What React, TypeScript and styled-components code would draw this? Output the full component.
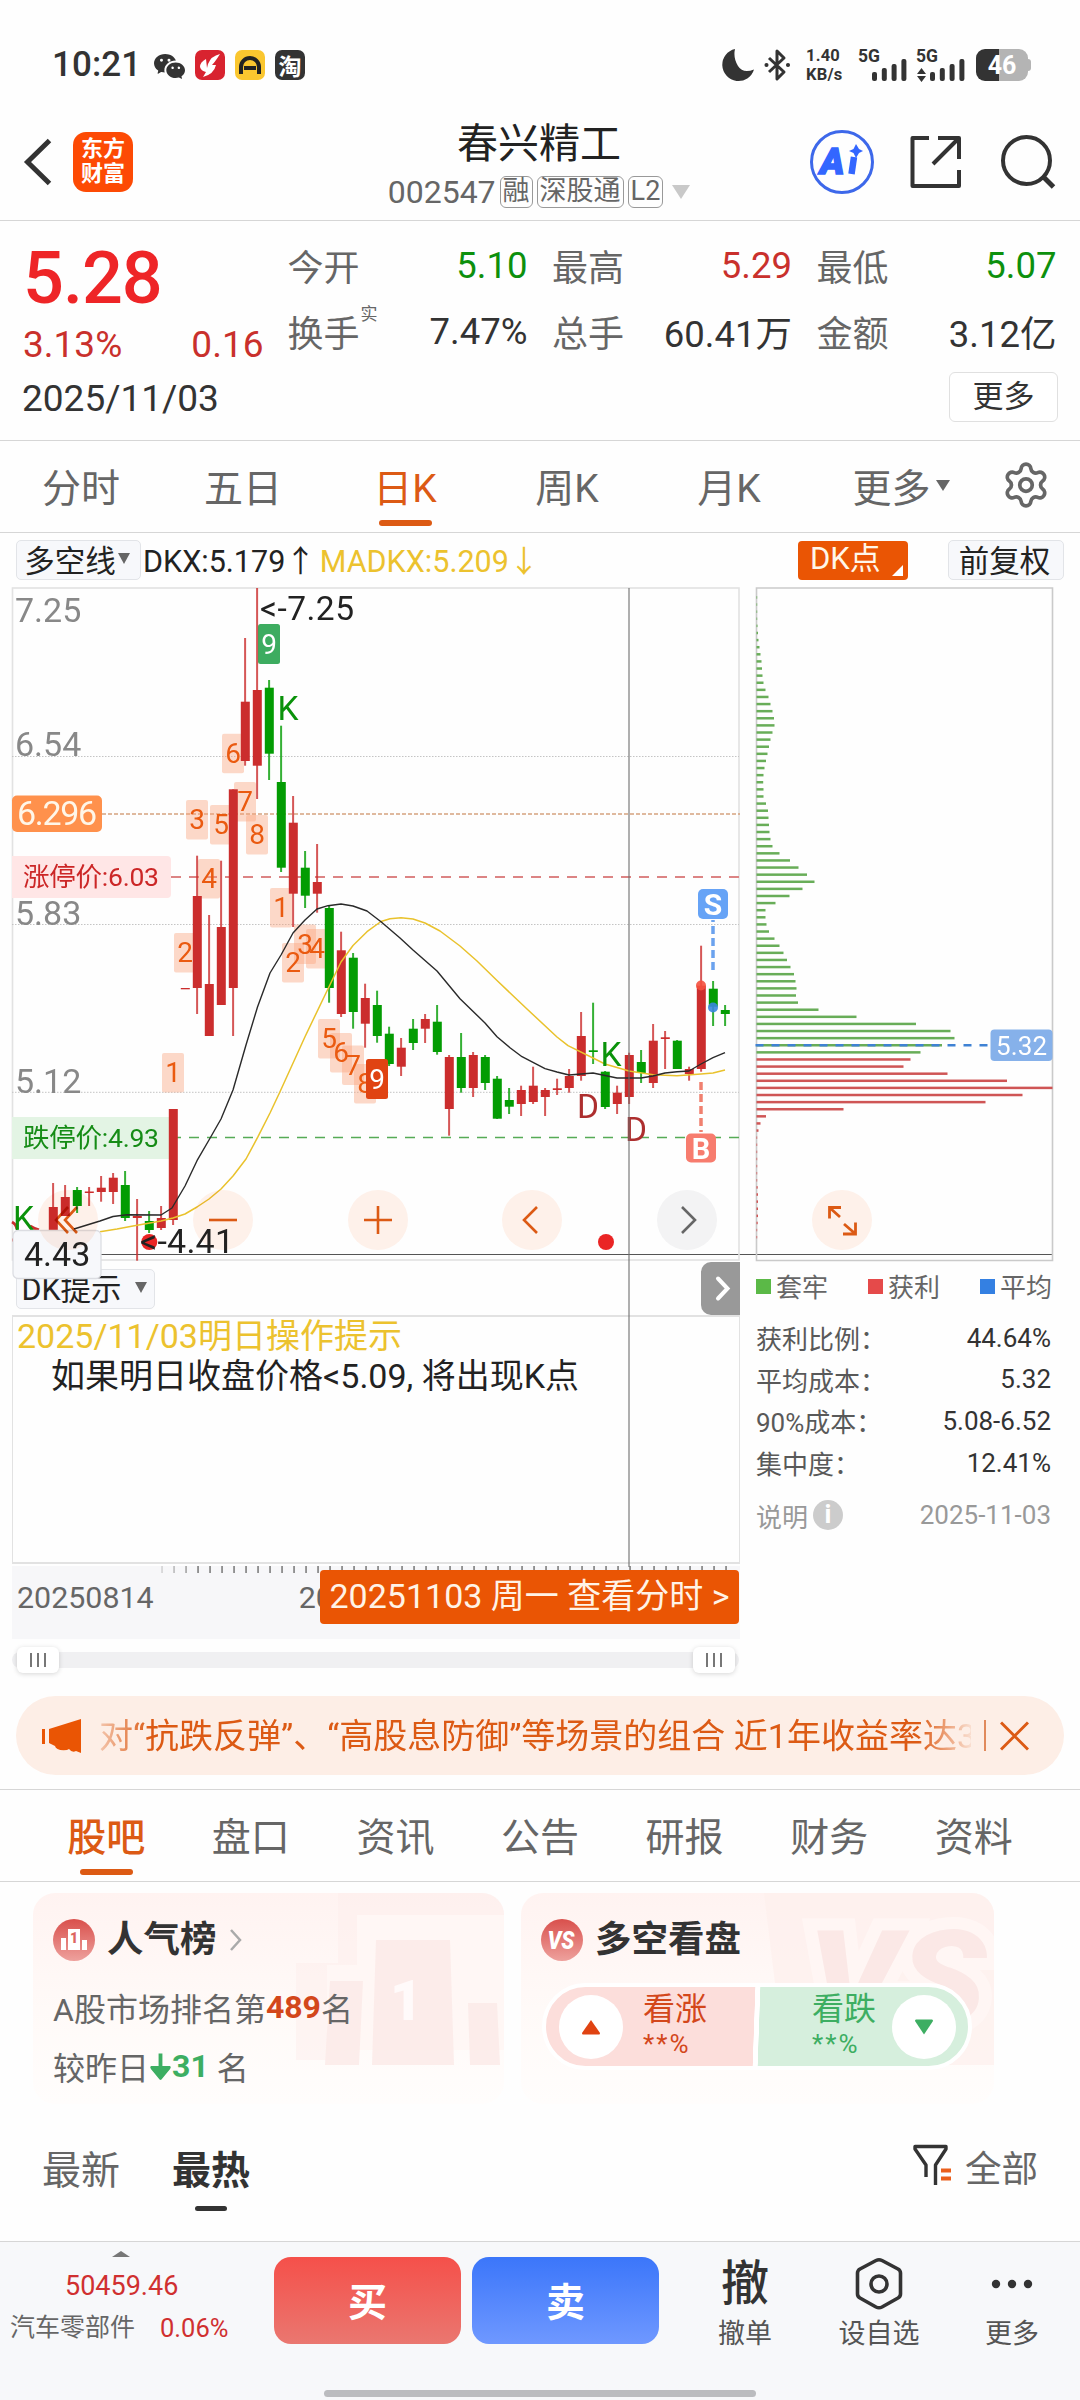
import React from "react";
import styled, { createGlobalStyle, css } from "styled-components";
import { Settings } from "lucide-react";
import { BsWechat } from "react-icons/bs";

const FONT = `Roboto, "Noto Sans CJK SC", sans-serif`;

const GlobalStyle = createGlobalStyle`
  * { box-sizing: border-box; }
  body { margin: 0; background: #fefefe; }
  svg { display: block; }
  svg text { font-family: ${FONT}; }
`;

const Screen = styled.div`
  width: 1080px;
  height: 2400px;
  overflow: hidden;
  background: #fefefe;
  font-family: ${FONT};
  color: #333;
  display: flex;
  flex-direction: column;
  white-space: nowrap;
`;

/* ---------- status bar ---------- */
const StatusBar = styled.div`
  height: 108px;
  padding: 22px 52px 0 52px;
  display: flex;
  align-items: center;
  justify-content: space-between;
`;
const StatusGroup = styled.div`
  display: flex;
  align-items: center;
  height: 36px;
`;
const Clock = styled.span`
  font-size: 35px;
  line-height: 36px;
  font-weight: 500;
  letter-spacing: 0.1px;
  color: #333;
  width: 102px;
`;
const AppBadge = styled.span<{ $bg: string }>`
  width: 30px;
  height: 30px;
  border-radius: 7px;
  margin-left: 10px;
  background: ${(p) => p.$bg};
  color: #fff;
  font-size: 23px;
  font-weight: 700;
  display: flex;
  align-items: center;
  justify-content: center;
`;
const NetSpeed = styled.div`
  width: 67px;
  padding-left: 15px;
  font-size: 16.5px;
  line-height: 19px;
  font-weight: 700;
  letter-spacing: 0.2px;
`;
const Battery = styled.div`
  width: 52px;
  height: 32px;
  border-radius: 9px;
  margin-left: 9px;
  background: linear-gradient(90deg, #333 0 23px, #b4b4b4 23px);
  color: #fff;
  font-size: 25px;
  font-weight: 700;
  display: flex;
  align-items: center;
  justify-content: center;
`;
const BatteryTip = styled.div`
  width: 3px;
  height: 12px;
  border-radius: 0 3px 3px 0;
  background: #b4b4b4;
  margin-right: -3px;
`;

/* ---------- header ---------- */
const Header = styled.header`
  height: 113px;
  border-bottom: 1.5px solid #d6d6d6;
  display: flex;
  align-items: center;
  justify-content: space-between;
  padding: 0 24px 4px 22px;
`;
const HeaderSide = styled.div<{ $end?: boolean }>`
  width: 300px;
  display: flex;
  align-items: center;
  justify-content: ${(p) => (p.$end ? "flex-end" : "flex-start")};
`;
const AppLogo = styled.div`
  width: 60px;
  height: 60px;
  border-radius: 13px;
  margin-left: 19px;
  background: #fd4a04;
  color: #fff;
  font-size: 22px;
  line-height: 25px;
  font-weight: 700;
  text-align: center;
  padding-top: 4px;
`;
const TitleBlock = styled.div`
  display: flex;
  flex-direction: column;
  align-items: center;
  padding-top: 8px;
`;
const Title = styled.h1`
  margin: 0;
  font-size: 41px;
  line-height: 52px;
  font-weight: 400;
  color: #222;
`;
const SubTitle = styled.div`
  display: flex;
  align-items: center;
  gap: 4px;
  height: 44px;
  font-size: 32px;
  color: #666;
`;
const Tag = styled.span`
  height: 32px;
  padding: 0 2px;
  border: 1.5px solid #999;
  border-radius: 6px;
  font-size: 27px;
  line-height: 28px;
`;
const DownTriangle = styled.i<{ $w: number; $h: number; $c: string; $ml?: number }>`
  width: 0;
  height: 0;
  margin-left: ${(p) => p.$ml ?? 0}px;
  border-left: ${(p) => p.$w / 2}px solid transparent;
  border-right: ${(p) => p.$w / 2}px solid transparent;
  border-top: ${(p) => p.$h}px solid ${(p) => p.$c};
`;

/* ---------- quote ---------- */
const Quote = styled.section`
  height: 220px;
  border-bottom: 1.5px solid #d6d6d6;
  display: flex;
  flex-direction: column;
`;
const QuoteTop = styled.div`
  display: flex;
  height: 151px;
`;
const PriceBlock = styled.div`
  width: 287.5px;
  padding: 18px 24px 0 23px;
  color: #c9302c;
`;
const Price = styled.div`
  font-size: 72px;
  line-height: 80px;
  font-weight: 500;
  letter-spacing: -1px;
  color: #ee2527;
`;
const Change = styled.div`
  display: flex;
  justify-content: space-between;
  font-size: 37px;
  line-height: 52px;
`;
const QuoteGrid = styled.div`
  padding-top: 12px;
  display: grid;
  grid-template-columns: repeat(3, 240px);
  grid-auto-rows: 66px;
  column-gap: 24.5px;
`;
const Cell = styled.div<{ $color?: string }>`
  display: flex;
  justify-content: space-between;
  align-items: center;
  padding-bottom: 1px;
  font-size: 36.5px;
  color: ${(p) => p.$color ?? "#333"};
`;
const CellLabel = styled.span`
  font-size: 36px;
  color: #666;
  display: flex;
  padding-bottom: 2px;
`;
const Sup = styled.small`
  font-size: 17px;
  line-height: 18px;
  margin-left: 1px;
`;
const QuoteBottom = styled.div`
  display: flex;
  justify-content: space-between;
  align-items: center;
  height: 50px;
  padding: 0 22px 0 22px;
  font-size: 37px;
  line-height: 54px;
`;
const QuoteDate = styled.span`
  padding-top: 4px;
`;
const MoreButton = styled.button`
  width: 109px;
  height: 50px;
  background: #fff;
  border: 1.5px solid #e0e0e0;
  border-radius: 6px;
  font: 400 31px/44px ${FONT};
  color: #333;
  padding: 0;
`;

/* ---------- tabs ---------- */
const Tabs = styled.nav<{ $h: number; $pad: string; $top?: boolean }>`
  height: ${(p) => p.$h}px;
  border-bottom: 1.5px solid #d6d6d6;
  ${(p) => p.$top && "border-top: 1.5px solid #d6d6d6;"}
  padding: ${(p) => p.$pad};
  display: flex;
`;
const Tab = styled.div<{ $active?: boolean; $bold?: boolean; $w: number }>`
  width: ${(p) => p.$w}px;
  position: relative;
  display: flex;
  align-items: center;
  justify-content: center;
  padding-bottom: 3px;
  font-size: 39px;
  font-weight: ${(p) => (p.$bold ? 500 : 400)};
  color: ${(p) => (p.$active ? "#dc5a14" : "#666")};
  ${(p) =>
    p.$active &&
    css`
      &::after {
        content: "";
        position: absolute;
        bottom: 6px;
        width: 53px;
        height: 6px;
        border-radius: 3px;
        background: #dc5a14;
      }
    `}
`;

/* ---------- indicator row ---------- */
const IndicatorRow = styled.div`
  height: 55px;
  padding: 0 16px 1px;
  display: flex;
  align-items: center;
  font-size: 30.5px;
`;
const Chip = styled.div<{ $w: number }>`
  width: ${(p) => p.$w}px;
  height: 40px;
  border: 1.5px solid #e2e4e8;
  border-radius: 5px;
  background: #f7f8fb;
  color: #222;
  font-size: 30.5px;
  display: flex;
  align-items: center;
  justify-content: center;
  padding: 0 3px 3px 0;
`;
const Reading = styled.span<{ $c: string; $ml: number }>`
  color: ${(p) => p.$c};
  margin-left: ${(p) => p.$ml}px;
  padding-bottom: 3px;
`;
const DkChip = styled.div`
  width: 110px;
  height: 39px;
  margin: 0 40px 0 auto;
  padding: 0 5px 4px 12px;
  border-radius: 4px;
  background: #ea5504;
  color: #fff6ea;
  font-size: 31px;
  line-height: 35px;
  display: flex;
  justify-content: space-between;
  align-items: flex-end;
`;
const Corner = styled.i`
  border-left: 11px solid transparent;
  border-bottom: 11px solid #fff;
`;

/* ---------- chart area ---------- */
const ChartArea = styled.section`
  position: relative;
  display: flex;
  height: 1092px;
`;
const LeftColumn = styled.div`
  width: 756px;
  display: flex;
  flex-direction: column;
`;
const RightColumn = styled.div`
  width: 296px;
`;
const Pane = styled.div`
  position: relative;
  height: 674px;
  z-index: 2;
  svg {
    overflow: visible;
  }
`;
const RoundButtons = styled.div<{ $left: number }>`
  position: absolute;
  left: ${(p) => p.$left}px;
  top: 602px;
  display: flex;
  gap: 94.8px;
  mix-blend-mode: multiply;
`;
const RoundButton = styled.div<{ $gray?: boolean }>`
  width: 60px;
  height: 60px;
  border-radius: 50%;
  background: ${(p) => (p.$gray ? "#f3f3f4" : "#fef1ea")};
  color: ${(p) => (p.$gray ? "#666" : "#dc5a14")};
  display: flex;
  align-items: center;
  justify-content: center;
`;
const DkHeader = styled.div`
  height: 53px;
  padding-left: 16px;
  width: 740px;
  display: flex;
  justify-content: space-between;
  align-items: center;
`;
const NextHandle = styled.div`
  width: 39px;
  height: 53px;
  border-radius: 10px 0 0 10px;
  background: #999;
  display: flex;
  align-items: center;
  justify-content: center;
`;
const HintPanel = styled.div`
  margin-left: 12px;
  width: 728px;
  height: 249px;
  border: 2px solid #e2e2e2;
  border-width: 2px 1.5px;
  padding: 0 0 0 4px;
  font-size: 34px;
  line-height: 40px;
  color: #222;
`;
const HintTitle = styled.div`
  margin-top: -1px;
  color: #ecc22e;
`;
const HintText = styled.div`
  padding-left: 34px;
`;
const TimeAxis = styled.div`
  margin: 2px 0 0 12px;
  width: 728px;
  height: 73px;
  background: #f7f7f9;
  position: relative;
  display: flex;
  align-items: center;
  padding: 0 0 11px 5px;
  font-size: 30.4px;
  color: #666;
  svg {
    position: absolute;
    left: 0;
    top: 0;
  }
`;
const SecondDate = styled.span`
  margin-left: 145px;
`;
const DateFlag = styled.div`
  position: absolute;
  right: 1px;
  top: 4px;
  width: 419px;
  height: 54px;
  border-radius: 4px;
  background: #ea5504;
  color: #fff3e6;
  font-size: 34px;
  line-height: 53px;
  text-align: center;
`;
const Slider = styled.div`
  margin: 13px 0 0 12px;
  width: 727px;
  height: 16px;
  border-radius: 8px;
  background: #f0f0f2;
  display: flex;
  align-items: center;
  justify-content: space-between;
  padding: 0 4px 0 5px;
`;
const SliderHandle = styled.div`
  width: 42px;
  height: 26px;
  border-radius: 6px;
  background: #fff;
  box-shadow: 0 1px 5px rgba(0, 0, 0, 0.16);
  display: flex;
  align-items: center;
  justify-content: center;
  gap: 5px;
  i {
    width: 2px;
    height: 14px;
    background: #777;
  }
`;
const CrossV = styled.div`
  position: absolute;
  z-index: 3;
  left: 628px;
  top: 0;
  width: 2px;
  height: 979px;
  background: rgba(110, 110, 110, 0.55);
`;
const CrossH = styled.div`
  position: absolute;
  z-index: 1;
  left: 100px;
  top: 666px;
  width: 952px;
  height: 1px;
  background: #555;
`;
const Legend = styled.div`
  height: 50px;
  display: flex;
  align-items: center;
  justify-content: space-between;
  font-size: 26px;
  color: #666;
  padding-bottom: 4px;
  margin-bottom: 5px;
`;
const LegendItem = styled.span<{ $c: string }>`
  display: flex;
  align-items: center;
  &::before {
    content: "";
    width: 15px;
    height: 15px;
    margin: 3px 5px 0 0;
    background: ${(p) => p.$c};
  }
`;
const Stat = styled.div`
  display: flex;
  justify-content: space-between;
  align-items: center;
  height: 41.6px;
  font-size: 26px;
  color: #333;
  padding-right: 1px;
  span {
    color: #595959;
  }
`;
const Note = styled.div`
  display: flex;
  align-items: center;
  height: 64px;
  font-size: 26px;
  color: #999;
  padding-right: 1px;
`;
const InfoDot = styled.i`
  width: 30px;
  height: 30px;
  border-radius: 50%;
  background: #ccc;
  color: #fff;
  margin: 0 auto 0 5px;
  font: 700 26px/29px ${FONT};
  text-align: center;
`;

/* ---------- banner ---------- */
const Banner = styled.div`
  margin: 16px 16px 14px;
  height: 79px;
  border-radius: 40px;
  background: #fdeee6;
  display: flex;
  align-items: center;
  padding-left: 25px;
  color: #dc5a14;
`;
const Marquee = styled.div`
  margin-left: 15px;
  width: 873px;
  overflow: hidden;
  padding-left: 1px;
  font-size: 34px;
  line-height: 46px;
  mask-image: linear-gradient(90deg, rgba(0, 0, 0, 0.25), #000 6%, #000 94%, rgba(0, 0, 0, 0.1));
`;
const BannerLine = styled.i`
  width: 1.5px;
  height: 31px;
  margin: 0 14px 0 13px;
  background: #e08a5c;
`;

/* ---------- cards ---------- */
const Cards = styled.div`
  display: flex;
  gap: 17px;
  padding: 11px 33px 0;
`;
const Card = styled.article<{ $w: number }>`
  position: relative;
  width: ${(p) => p.$w}px;
  height: 211px;
  border-radius: 22px;
  overflow: hidden;
  padding: 26px 20px 0 20px;
  background: linear-gradient(180deg, #fff3f1, #fffaf8 55%, #fffdfc);
`;
const Watermark = styled.svg`
  position: absolute;
  inset: 0;
`;
const CardHead = styled.div`
  position: relative;
  height: 42px;
  display: flex;
  align-items: center;
  font-size: 36.5px;
  line-height: 40px;
  font-weight: 700;
  color: #333;
  svg {
    margin-right: 12px;
  }
`;
const CardLine = styled.div<{ $mt: number }>`
  position: relative;
  margin-top: ${(p) => p.$mt}px;
  height: 44px;
  display: flex;
  align-items: center;
  font-size: 32px;
  color: #666;
`;
const Strong = styled.b<{ $c: string }>`
  color: ${(p) => p.$c};
  font-weight: 700;
`;
const Vote = styled.div`
  position: relative;
  margin: 22px 0 0 1px;
  width: 430px;
  height: 87px;
  border-radius: 44px;
  border: 4px solid #fff;
  display: flex;
  align-items: center;
  justify-content: space-between;
  padding: 0 12px 0 13px;
  background: linear-gradient(92deg, #fcdedb 0 209px, #fff 209.5px 214px, #d6efdd 214.5px);
`;
const VoteText = styled.div<{ $c: string; $side: "l" | "r" }>`
  color: ${(p) => p.$c};
  margin: ${(p) => (p.$side === "l" ? "0 auto 0 20px" : "0 16px 0 auto")};
  padding-bottom: 2px;
  font-size: 32px;
  line-height: 37px;
`;
const VotePct = styled.div`
  font-size: 26px;
  line-height: 32px;
  letter-spacing: 2px;
`;
const VoteDot = styled.div`
  width: 64px;
  height: 64px;
  border-radius: 50%;
  background: #fff;
  display: flex;
  align-items: center;
  justify-content: center;
`;

/* ---------- feed sort ---------- */
const SortRow = styled.div`
  height: 137px;
  padding: 0 42px 12px;
  display: flex;
  align-items: center;
  font-size: 39px;
  color: #666;
`;
const SortTab = styled.span<{ $active?: boolean }>`
  position: relative;
  margin-right: 52px;
  ${(p) =>
    p.$active &&
    css`
      color: #333;
      font-weight: 700;
      &::after {
        content: "";
        position: absolute;
        left: 23px;
        top: 67px;
        width: 32px;
        height: 5px;
        border-radius: 3px;
        background: #333;
      }
    `}
`;
const FilterBox = styled.span`
  margin-left: auto;
  display: flex;
  align-items: center;
  gap: 12px;
  font-size: 36.5px;
  svg {
    margin-bottom: 3px;
  }
`;

/* ---------- bottom bar ---------- */
const BottomBar = styled.footer`
  position: relative;
  flex: 1;
  border-top: 1.5px solid #d6d6d6;
  background: #f7f8fa;
  display: flex;
`;
const IndexBox = styled.div`
  width: 274px;
  padding-top: 9px;
  display: flex;
  flex-direction: column;
  font-size: 27px;
  color: #d03030;
`;
const UpTriangle = styled.i`
  margin-left: 112px;
  width: 0;
  border-left: 9px solid transparent;
  border-right: 9px solid transparent;
  border-bottom: 6px solid #777;
`;
const IndexValue = styled.div`
  padding-left: 65px;
  margin-top: 8px;
  line-height: 42px;
`;
const IndexName = styled.div`
  display: flex;
  padding-left: 10px;
  gap: 25px;
  font-size: 25.5px;
  line-height: 42px;
  span {
    color: #666;
    font-size: 25px;
  }
`;
const TradeButton = styled.button<{ $from: string; $to: string }>`
  width: 187px;
  height: 87px;
  margin: 15px 11px 0 0;
  border: 0;
  border-radius: 17px;
  background: linear-gradient(180deg, ${(p) => p.$from}, ${(p) => p.$to});
  color: #fff;
  font: 700 39px/87px ${FONT};
  padding: 3px 0 0;
`;
const Action = styled.div<{ $w: number; $ml?: number }>`
  width: ${(p) => p.$w}px;
  margin-left: ${(p) => p.$ml ?? 0}px;
  padding-top: 12px;
  display: flex;
  flex-direction: column;
  align-items: center;
  font-size: 27px;
  line-height: 40px;
  color: #555;
`;
const ActionIcon = styled.div`
  height: 60px;
  display: flex;
  align-items: center;
  font-size: 48px;
  font-weight: 500;
  color: #333;
`;
const HomeBar = styled.div`
  position: absolute;
  left: 324px;
  bottom: 3px;
  width: 432px;
  height: 7px;
  border-radius: 4px;
  background: #bbbcbf;
`;

/* ---------- data ---------- */
type Candle = [number, number, number, number, 0 | 1];
// high, body top, body bottom, low, 1 = rising; one entry per trading day
const candles: Candle[] = [
  [1183, 1207, 1232, 1232, 1],
  [1185, 1197, 1216, 1216, 1],
  [1187, 1190, 1206, 1213, 0],
  [1187, 1191.5, 1193, 1206, 1],
  [1176, 1187.7, 1192, 1201.7, 1],
  [1173, 1177.7, 1192, 1204, 1],
  [1171, 1185, 1218, 1221, 0],
  [1199, 1216, 1218, 1260.7, 1],
  [1211, 1221, 1230, 1233, 0],
  [1206, 1218, 1228, 1230, 1],
  [1109, 1109, 1220, 1225, 1],
  [988, 988, 989.3, 989, 1],
  [855.7, 896, 988, 1014, 1],
  [915, 984, 1036, 1036, 1],
  [860.7, 927, 1005, 1005, 1],
  [789.3, 789.3, 988, 1036, 1],
  [638, 701.7, 761, 765.7, 1],
  [588, 690, 765.7, 799, 1],
  [680, 687.7, 753.7, 780, 0],
  [725.7, 782, 867.7, 872, 0],
  [796, 822.7, 893.7, 927, 1],
  [851, 867.7, 895.7, 908, 0],
  [844, 882, 893.7, 912.7, 1],
  [905.7, 908, 988, 1002.7, 0],
  [931.7, 950.3, 1014, 1017, 1],
  [953, 957.7, 1012, 1028.7, 0],
  [983.7, 998, 1023.7, 1047.7, 1],
  [990.7, 1005, 1036, 1042.7, 0],
  [1026.7, 1033.7, 1064, 1066, 0],
  [1038, 1047.7, 1066.7, 1076, 1],
  [1019, 1028.7, 1043, 1050, 0],
  [1014, 1019, 1028.7, 1043, 1],
  [1005, 1021.7, 1052, 1054.7, 0],
  [1055, 1057, 1109, 1135.7, 1],
  [1033, 1057, 1088, 1092.7, 0],
  [1052, 1055, 1088, 1097, 1],
  [1055, 1057, 1083, 1090, 0],
  [1076, 1078.7, 1118.7, 1119, 0],
  [1088, 1100, 1106.7, 1114, 0],
  [1085.7, 1090, 1104, 1116, 1],
  [1066.7, 1085.7, 1102, 1104, 1],
  [1088, 1090, 1097, 1116, 1],
  [1078.7, 1088.3, 1090, 1095, 1],
  [1069, 1076, 1088, 1092.7, 1],
  [1012, 1036, 1076, 1080.7, 1],
  [1002.7, 1050.3, 1052, 1064, 0],
  [1071, 1071.7, 1107, 1109, 0],
  [1085.7, 1092.7, 1104, 1114, 1],
  [1052.7, 1055, 1097, 1104, 1],
  [1050, 1062, 1073, 1083, 0],
  [1024, 1040.7, 1083, 1088, 1],
  [1031, 1037.3, 1039, 1069, 1],
  [1040, 1040.7, 1069, 1069, 0],
  [1066.7, 1069, 1074, 1080.7, 1],
  [945.7, 985.7, 1069, 1071.7, 1],
  [981, 988.7, 1006.7, 1026, 0],
  [1005, 1010, 1014, 1026, 0],
];

const dkx =
  "74,1229 100,1221 113,1216.5 127,1214.7 161,1215 172,1208 185,1186 197,1160.7 209,1140 221,1119 233,1090 246,1045 257.5,1007 270,973 281,955 293,933 305,920 317,909 328,905.7 341,904 353,906 367,911 381,921.7 400,938 413,950 437,971 460,998.7 485,1023 497,1036.7 510,1047.7 522,1056.7 545,1068.7 557,1072 569,1075 593,1073 617,1078 641,1078 653,1076 665,1073 677,1071.7 689,1071 701,1064 713,1057.7 725,1052.7";
const madkx =
  "100,1231.7 117,1229 133,1226 161,1221 173,1218 185,1214 197,1207 209,1199 221,1189 233,1176 246,1159 258,1136.7 270,1113 280,1091.7 305,1036.7 329,986.7 341,962 353,945.5 367,931.7 381,921.5 390,918.7 401,917.7 413,919 425,923 440,931 460,946 477,961 497,980.5 527,1009 557,1037 568,1045.7 593,1058 605,1064 629,1071 653,1074.7 677,1075.7 701,1074 713,1073 725,1070";

const counts: [string, number, number][] = [
  ["6", 222, 733.7], ["3", 186, 800], ["5", 210, 805], ["7", 234, 782], ["8", 246, 815],
  ["4", 198, 859], ["1", 270, 888], ["2", 174, 933], ["2", 282, 943], ["3", 294, 924.5],
  ["4", 306, 929], ["1", 162, 1053], ["5", 318, 1019], ["6", 330, 1033], ["7", 342, 1045.5],
  ["8", 354, 1064],
];

const chips = [
  0.7, 0.7, 0.7, 0.7, 1, 1.5, 2, 3, 4, 5, 5.5, 6, 7, 9, 12, 14, 16, 17.5, 18, 16, 14, 12.5, 11, 9.5, 8, 7, 6.7, 7, 7,
  9.5, 11.5, 12, 12.5, 13, 14, 16, 23, 33.5, 42, 50.5, 58, 46, 33, 19, 9, 9, 10, 12.5, 18, 23, 27, 30.5, 34, 37.5, 39,
  40, 39.5, 41.5, 62, 100, 159.5, 194, 198, 185.5, 164, 154, 147, 191, 250.5, 296, 266, 229, 87, 9.5, 4, 2, 0.7, 0.7,
  0.7, 0.7, 0.7, 0.7, 0.7, 1.2, 1.5, 1.5, 1.5, 1.5, 1.2, 0.7, 0.7,
];

const RED = "#cb2d2d";
const GREEN = "#039c03";

function KChart() {
  return (
    <svg width="741" height="674" viewBox="0 588 741 674">
      <rect x="12.5" y="588" width="726.5" height="672" fill="none" stroke="#e2e2e2" strokeWidth="1.6" />
      {[756.5, 924.5, 1092.3].map((y) => (
        <line key={y} x1="12" x2="739" y1={y} y2={y} stroke="#c4c4c4" strokeWidth="1" strokeDasharray="1.5 1.5" />
      ))}
      <g fontSize="34" fill="#888">
        <text x="15" y="622">7.25</text>
        <text x="15" y="756">6.54</text>
        <text x="15" y="925">5.83</text>
        <text x="15" y="1093">5.12</text>
      </g>
      <line x1="102" x2="740" y1="814" y2="814" stroke="#d5a27f" strokeWidth="1.6" strokeDasharray="4 2" />
      <line x1="171" x2="739" y1="877" y2="877" stroke="#dc8484" strokeWidth="1.8" strokeDasharray="10 8" />
      <line x1="171" x2="739" y1="1137.6" y2="1137.6" stroke="#56ab56" strokeWidth="1.5" strokeDasharray="10 8" />
      <rect x="12" y="795.5" width="90" height="36.5" rx="5" fill="#ff914c" />
      <text x="17" y="825" fontSize="34" fill="#fff6e8" textLength="80">6.296</text>
      <path d="M12 856H167a4 4 0 0 1 4 4V894a4 4 0 0 1-4 4H12Z" fill="#ffe6e6" />
      <text x="23" y="886" fontSize="26.5" fill="#cc2727" textLength="136">涨停价:6.03</text>
      <path d="M12 1117H171V1159H12Z" fill="#e3f4e4" />
      <text x="23" y="1147" fontSize="26.5" fill="#168c16" textLength="136">跌停价:4.93</text>
      {counts.map(([, x, y], i) => (
        <rect key={i} x={x} y={y} width="22" height="39.5" rx="2" fill="rgba(251,160,120,.4)" />
      ))}
      <rect x="258" y="624" width="22" height="40" rx="2.5" fill="#3dac60" />
      <path d="M12 1222q4 2 5 7M30 1226q5 3 9 4M12 1240h2" stroke={RED} strokeWidth="3" fill="none" />
      {candles.map(([h, t, b, l, up], i) => {
        const x = 53.3 + i * 12;
        const c = up ? RED : GREEN;
        return (
          <g key={i} fill={c}>
            <rect x={x - 1.2} y={h} width="2" height={Math.max(l - h, 0)} opacity=".8" />
            <rect x={x - 4.5} y={t} width="9" height={b - t} />
          </g>
        );
      })}
      <polyline points={madkx} fill="none" stroke="#e9c22c" strokeWidth="1.5" strokeLinejoin="round" />
      <polyline points={dkx} fill="none" stroke="#2a2a2a" strokeWidth="1.4" strokeLinejoin="round" />
      <g fontSize="28" fill="#ea5a10" textAnchor="middle">
        {counts.map(([n, x, y], i) => (
          <text key={i} x={x + 11} y={y + 29.3}>{n}</text>
        ))}
      </g>
      <rect x="366" y="1059" width="22" height="40" rx="2.5" fill="#e04312" />
      <g fontSize="28" fill="#fff" textAnchor="middle">
        <text x="269" y="653.5">9</text>
        <text x="377" y="1088.5">9</text>
      </g>
      <g fontSize="33.5">
        <g fill="#0a920a">
          <text x="277.5" y="720">K</text>
          <text x="13" y="1230">K</text>
          <text x="600.5" y="1066">K</text>
        </g>
        <g fill="#ad2e2e">
          <text x="577" y="1118">D</text>
          <text x="625" y="1141">D</text>
        </g>
        <text x="260" y="620" fill="#222" textLength="94">&lt;-7.25</text>
      </g>
      <circle cx="149.3" cy="1242" r="8" fill="#ea2424" />
      <circle cx="606" cy="1242" r="8" fill="#ea2424" />
      <text x="140" y="1253" fontSize="34" fill="#222" textLength="94">&lt;-4.41</text>
      <line x1="713" x2="713" y1="920" y2="970" stroke="#6ba2ee" strokeWidth="3.5" strokeDasharray="8 4" strokeDashoffset="6" />
      <rect x="698" y="889" width="30" height="30" rx="5" fill="#66a3f6" />
      <line x1="701" x2="701" y1="1082" y2="1132" stroke="#f0806f" strokeWidth="3.5" strokeDasharray="8 4" />
      <rect x="686" y="1133.5" width="30" height="29" rx="5" fill="#f77c6e" />
      <g fontSize="30" fontWeight="700" fill="#fff" textAnchor="middle">
        <text x="713" y="915">S</text>
        <text x="701" y="1159" fontSize="29">B</text>
      </g>
      <circle cx="701" cy="985.5" r="5" fill="#f4503e" opacity=".9" />
      <circle cx="713" cy="1007.5" r="5" fill="#3a86e0" opacity=".9" />
      <rect x="13" y="1230.5" width="88" height="48" rx="5" fill="#f7f8fb" stroke="#dcdde2" strokeWidth="1.3" />
      <text x="24" y="1266" fontSize="34" fill="#222">4.43</text>
    </svg>
  );
}

function CostChart() {
  return (
    <svg width="297" height="674" viewBox="755.5 588 297 674">
      <path d="M756 588V1260.5H1052V588Z" fill="none" stroke="#cacaca" strokeWidth="1.6" />
      {chips.map((w, i) => (
        <rect key={i} x="756" y={596.2 + i * 7.108} width={w} height="2.5" fill={i < 65 ? "#68ad58" : "#cf5555"} />
      ))}
      <line x1="755" x2="990" y1="1045.3" y2="1045.3" stroke="#3f82d4" strokeWidth="2.6" strokeDasharray="8 8" />
      <rect x="990" y="1029.5" width="62" height="31.5" rx="4" fill="#86b1ea" />
      <text x="995.5" y="1054.5" fontSize="26" fill="#fff" textLength="51">5.32</text>
    </svg>
  );
}

const signal = (x: number) =>
  [9, 13, 17, 22].map((h, i) => <rect key={x + i} x={x + i * 9.8} y={34 - h} width="5" height={h} rx="2" />);

export default function App() {
  return (
    <>
      <GlobalStyle />
      <Screen lang="zh-CN">
        <StatusBar>
          <StatusGroup>
            <Clock>10:21</Clock>
            <BsWechat size={31} />
            <AppBadge $bg="#d8232f">
              <svg width="30" height="30" viewBox="0 0 30 30" fill="#fff">
                <path d="M25 4Q16 6 13 14L12 18L11 9Q5 12 5 17Q6 21 11 22L8 27Q19 24 21 15L17 15Q20 12 25 4Z" />
              </svg>
            </AppBadge>
            <AppBadge $bg="#fac62f">
              <svg width="30" height="30" viewBox="0 0 30 30" fill="none" stroke="#222" strokeWidth="4">
                <path d="M6 24V17a9 9 0 0 1 18 0V24M9 18H21" />
              </svg>
            </AppBadge>
            <AppBadge $bg="#333">淘</AppBadge>
          </StatusGroup>
          <StatusGroup>
            <svg width="34" height="34" viewBox="0 0 34 34" fill="#333">
              <path d="M14 1A16.2 16.2 0 1 0 33 21.500Q22 26 17 18Q12 10 14 1Z" />
            </svg>
            <svg width="36" height="34" viewBox="0 0 36 34" fill="none" stroke="#333" strokeWidth="3" strokeLinejoin="round">
              <path d="M14 10L29 24L22 31V3L29 10L14 24" />
              <circle cx="11.500" cy="17" r="1.300" fill="#333" strokeWidth="1.500" />
              <circle cx="33" cy="17" r="1.300" fill="#333" strokeWidth="1.500" />
            </svg>
            <NetSpeed>
              <div>1.40</div>
              <div>KB/s</div>
            </NetSpeed>
            <svg width="109" height="36" viewBox="0 0 109 36" fill="#333">
              <text x="0" y="15" fontSize="17.5" fontWeight="700">5G</text>
              <text x="58" y="15" fontSize="17.5" fontWeight="700">5G</text>
              {signal(14)}
              {signal(72)}
              <path d="M59 27L63.500 21L68 27ZM59 29L63.500 35L68 29Z" />
            </svg>
            <Battery>46</Battery>
            <BatteryTip />
          </StatusGroup>
        </StatusBar>

        <Header>
          <HeaderSide>
            <svg width="32" height="52" viewBox="0 0 32 52" fill="none" stroke="#333" strokeWidth="5">
              <path d="M27.500 4.500L5.500 26L27.500 47.500" />
            </svg>
            <AppLogo>
              <div>东方</div>
              <div>财富</div>
            </AppLogo>
          </HeaderSide>
          <TitleBlock>
            <Title>春兴精工</Title>
            <SubTitle>
              002547
              <Tag>融</Tag>
              <Tag>深股通</Tag>
              <Tag>L2</Tag>
              <DownTriangle $w={19} $h={14} $c="#c9c9c9" $ml={5} />
            </SubTitle>
          </TitleBlock>
          <HeaderSide $end>
            <svg width="248" height="66" viewBox="0 0 248 66" fill="none" stroke="#333" strokeWidth="4">
              <circle cx="34" cy="33" r="30.500" stroke="#3d68ea" strokeWidth="3" />
              <text x="12" y="45" fontSize="37" fontWeight="900" fontStyle="italic" fill="#3366ff" stroke="#3366ff" strokeWidth="1.500">A</text>
              <path d="M46 28L43.500 45" stroke="#3366ff" strokeWidth="6.500" />
              <path d="M48 15L51 20L55 22L51 24L48 29L45.500 24L41 22L45.500 20Z" fill="#3366ff" stroke="none" />
              <path d="M121 9H104.500V57H151V41M130 9H151V30M151 9L125 35" strokeLinejoin="round" />
              <circle cx="218.500" cy="31.500" r="23.500" />
              <path d="M235 47.500L245.500 58" strokeWidth="5" />
            </svg>
          </HeaderSide>
        </Header>

        <Quote>
          <QuoteTop>
            <PriceBlock>
              <Price>5.28</Price>
              <Change>
                <span>3.13%</span>
                <span>0.16</span>
              </Change>
            </PriceBlock>
            <QuoteGrid>
              <Cell $color="#0d900d"><CellLabel>今开</CellLabel>5.10</Cell>
              <Cell $color="#c9302c"><CellLabel>最高</CellLabel>5.29</Cell>
              <Cell $color="#0d900d"><CellLabel>最低</CellLabel>5.07</Cell>
              <Cell><CellLabel>换手<Sup>实</Sup></CellLabel>7.47%</Cell>
              <Cell><CellLabel>总手</CellLabel>60.41万</Cell>
              <Cell><CellLabel>金额</CellLabel>3.12亿</Cell>
            </QuoteGrid>
          </QuoteTop>
          <QuoteBottom>
            <QuoteDate>2025/11/03</QuoteDate>
            <MoreButton>更多</MoreButton>
          </QuoteBottom>
        </Quote>

        <Tabs $h={92} $pad="0">
          <Tab $w={162}>分时</Tab>
          <Tab $w={162}>五日</Tab>
          <Tab $w={162} $active>日K</Tab>
          <Tab $w={162}>周K</Tab>
          <Tab $w={162}>月K</Tab>
          <Tab $w={182}>更多<DownTriangle $w={14} $h={11} $c="#666" $ml={5} /></Tab>
          <Tab $w={68}><Settings size={50} strokeWidth={1.8} /></Tab>
        </Tabs>

        <IndicatorRow>
          <Chip $w={125}>多空线<DownTriangle $w={13} $h={11} $c="#666" $ml={2} /></Chip>
          <Reading $c="#222" $ml={2}>DKX:5.179↑</Reading>
          <Reading $c="#ecc22e" $ml={4}>MADKX:5.209↓</Reading>
          <DkChip>DK点<Corner /></DkChip>
          <Chip $w={116}>前复权</Chip>
        </IndicatorRow>

        <ChartArea>
          <LeftColumn>
            <Pane>
              <KChart />
              <RoundButtons $left={38}>
                <RoundButton>
                  <svg width="60" height="60" fill="none" stroke="#dc5a14" strokeWidth="2.6"><path d="M30 17L18 30L30 43M39 17L27 30L39 43" /></svg>
                </RoundButton>
                <RoundButton>
                  <svg width="60" height="60" fill="none" stroke="#dc5a14" strokeWidth="2.6"><path d="M16 30H44" /></svg>
                </RoundButton>
                <RoundButton>
                  <svg width="60" height="60" fill="none" stroke="#dc5a14" strokeWidth="2.6"><path d="M16 30H44M30 16V44" /></svg>
                </RoundButton>
                <RoundButton>
                  <svg width="60" height="60" fill="none" stroke="#dc5a14" strokeWidth="2.6"><path d="M35 17L22 30L35 43" /></svg>
                </RoundButton>
                <RoundButton $gray>
                  <svg width="60" height="60" fill="none" stroke="#666" strokeWidth="2.6"><path d="M25 17L38 30L25 43" /></svg>
                </RoundButton>
              </RoundButtons>
            </Pane>
            <DkHeader>
              <Chip $w={139}>DK提示<DownTriangle $w={13} $h={11} $c="#666" $ml={13} /></Chip>
              <NextHandle>
                <svg width="39" height="53" fill="none" stroke="#fff" strokeWidth="4" strokeLinecap="round"><path d="M17 16.500L26.500 26.500L17 36.500" /></svg>
              </NextHandle>
            </DkHeader>
            <HintPanel>
              <HintTitle>2025/11/03明日操作提示</HintTitle>
              <HintText>如果明日收盘价格&lt;5.09, 将出现K点</HintText>
            </HintPanel>
            <TimeAxis>
              <svg width="728" height="8">
                {Array.from({ length: 48 }, (_, i) => (
                  <rect key={i} x={149.300 + i * 12} y="0" width="1.5" height="7" fill="#777" opacity={i < 3 ? 0.3 + i * 0.2 : 1} />
                ))}
              </svg>
              20250814
              <SecondDate>20250908</SecondDate>
              <DateFlag>20251103 周一 查看分时 &gt;</DateFlag>
            </TimeAxis>
            <Slider>
              <SliderHandle><i /><i /><i /></SliderHandle>
              <SliderHandle><i /><i /><i /></SliderHandle>
            </Slider>
          </LeftColumn>
          <RightColumn>
            <Pane>
              <CostChart />
              <RoundButtons $left={56}>
                <RoundButton>
                  <svg width="60" height="60" fill="none" stroke="#dc5a14" strokeWidth="2.8"><path d="M29 17.500H17.500V28.500M18 18L28 27M31 44H43.500V32.500M43 43.500L32 34" /></svg>
                </RoundButton>
              </RoundButtons>
            </Pane>
            <Legend>
              <LegendItem $c="#5bb947">套牢</LegendItem>
              <LegendItem $c="#e54a4a">获利</LegendItem>
              <LegendItem $c="#3480e2">平均</LegendItem>
            </Legend>
            <Stat><span>获利比例：</span>44.64%</Stat>
            <Stat><span>平均成本：</span>5.32</Stat>
            <Stat><span>90%成本：</span>5.08-6.52</Stat>
            <Stat><span>集中度：</span>12.41%</Stat>
            <Note>说明<InfoDot>i</InfoDot>2025-11-03</Note>
          </RightColumn>
          <CrossV />
          <CrossH />
        </ChartArea>

        <Banner>
          <svg width="42" height="36" viewBox="0 0 42 36" fill="#ea5504">
            <path d="M1 11H4V26H1ZM8 11L40 1V35L35 33Q31 35 28 31L26 32Q15 33 14 28L8 25Z" />
          </svg>
          <Marquee>对“抗跌反弹”、“高股息防御”等场景的组合 近1年收益率达3</Marquee>
          <BannerLine />
          <svg width="29" height="30" fill="none" stroke="#dc5a14" strokeWidth="3"><path d="M1 1.500L28 28.500M28 1.500L1 28.500" /></svg>
        </Banner>

        <Tabs $h={93} $pad="0 34px" $top>
          {["股吧", "盘口", "资讯", "公告", "研报", "财务", "资料"].map((t, i) => (
            <Tab key={t} $w={144.6} $active={i === 0} $bold={i === 0}>{t}</Tab>
          ))}
        </Tabs>

        <Cards>
          <Card $w={471}>
            <Watermark width="471" height="211" viewBox="33 1893 471 211">
              <path d="M338 1893H504V1990H338ZM296 1963H340V2060H296Z" fill="#fdeeec" opacity=".5" />
              <path d="M357 1915H504V2050H327V1965H357Z" fill="#fff7f5" />
              <path d="M376 1940H450L454 2065H372ZM330 1981H363L359 2065H325ZM468 2003H497L500 2065H470Z" fill="#fceae8" opacity=".85" />
              <text x="390" y="2020" fontSize="56" fontWeight="900" fill="#fffafa">1</text>
            </Watermark>
            <CardHead>
              <svg width="42" height="42" viewBox="0 0 42 42">
                <defs>
                  <linearGradient id="badge" x2="0" y2="1"><stop stopColor="#d9504c" /><stop offset="1" stopColor="#eea19d" /></linearGradient>
                </defs>
                <circle cx="21" cy="21" r="21" fill="url(#badge)" />
                <path d="M15 10H27V31H15ZM8 19H13V31H8ZM29 21H34V31H29Z" fill="#fff" />
                <text x="17" y="24" fontSize="14" fontWeight="900" fill="#dd6661">1</text>
              </svg>
              人气榜
              <svg width="12" height="22" viewBox="0 0 12 22" fill="none" stroke="#aaa" strokeWidth="2.5" style={{ marginLeft: 13 }}><path d="M1 1L10 11L1 21" /></svg>
            </CardHead>
            <CardLine $mt={24}>A股市场排名第<Strong $c="#d3471b">489</Strong>名</CardLine>
            <CardLine $mt={15}>
              较昨日
              <svg width="23" height="32" viewBox="0 0 24 32" fill="#3dae62"><path d="M10 3H14V16H22Q23.500 17 22 19L13 30Q12 31 11 30L2 19Q0.500 17 2 16H10Z" /></svg>
              <Strong $c="#3dae62">31</Strong>&nbsp;名
            </CardLine>
          </Card>
          <Card $w={473}>
            <Watermark width="473" height="211" viewBox="521 1893 473 211">
              <path d="M764 1893H994V2065H785Z" fill="#fdefed" opacity=".7" />
              <text x="808" y="2024" fontSize="132" fontWeight="900" fontStyle="italic" fill="#fbe8e6" stroke="#fff6f4" strokeWidth="24" paintOrder="stroke" textLength="178" lengthAdjust="spacingAndGlyphs">VS</text>
            </Watermark>
            <CardHead>
              <svg width="42" height="42" viewBox="0 0 42 42">
                <circle cx="21" cy="21" r="21" fill="url(#badge)" />
                <text x="20" y="29.500" fontSize="25" fontWeight="900" fontStyle="italic" textAnchor="middle" fill="#fff" textLength="27" lengthAdjust="spacingAndGlyphs">VS</text>
              </svg>
              多空看盘
            </CardHead>
            <Vote>
              <VoteDot><svg width="20" height="16" viewBox="0 0 20 16" fill="#e04312"><path d="M10 1L19 14Q19 15.500 18 15.500H2Q1 15.500 1 14Z" /></svg></VoteDot>
              <VoteText $c="#d3471b" $side="l">看涨<VotePct>**%</VotePct></VoteText>
              <VoteText $c="#3dae62" $side="r">看跌<VotePct>**%</VotePct></VoteText>
              <VoteDot><svg width="20" height="16" viewBox="0 0 20 16" fill="#3dae62"><path d="M10 15.500L19 2Q19 .5 18 .5H2Q1 .5 1 2Z" /></svg></VoteDot>
            </Vote>
          </Card>
        </Cards>

        <SortRow>
          <SortTab>最新</SortTab>
          <SortTab $active>最热</SortTab>
          <FilterBox>
            <svg width="40" height="42" viewBox="0 0 40 42" fill="none" stroke="#333" strokeWidth="3.400" strokeLinejoin="round">
              <path d="M13 33V21L2 5V2.500H33V5L22.500 21V41" />
              <path d="M28 26.500H38M28 34.500H38" stroke="#ea5f1c" strokeWidth="4" />
            </svg>
            全部
          </FilterBox>
        </SortRow>

        <BottomBar>
          <IndexBox>
            <UpTriangle />
            <IndexValue>50459.46</IndexValue>
            <IndexName><span>汽车零部件</span>0.06%</IndexName>
          </IndexBox>
          <TradeButton $from="#f5504a" $to="#ea7770">买</TradeButton>
          <TradeButton $from="#3b76fa" $to="#6f98ff">卖</TradeButton>
          <Action $w={134} $ml={8}>
            <ActionIcon>撤</ActionIcon>
            撤单
          </Action>
          <Action $w={134}>
            <ActionIcon>
              <svg width="50" height="54" viewBox="0 0 50 54" fill="none" stroke="#333" strokeWidth="3.600" strokeLinejoin="round">
                <path d="M22 3.500Q25 2 28 3.500L44 12Q46.500 13.500 46.500 16V37Q46.500 39.500 44 41L28 50Q25 51.500 22 50L6 41Q3.500 39.500 3.500 37V16Q3.500 13.500 6 12Z" />
                <circle cx="25" cy="27" r="8" />
              </svg>
            </ActionIcon>
            设自选
          </Action>
          <Action $w={132}>
            <ActionIcon>
              <svg width="44" height="12" fill="#333"><circle cx="6" cy="6" r="4.200" /><circle cx="22" cy="6" r="4.200" /><circle cx="38" cy="6" r="4.200" /></svg>
            </ActionIcon>
            更多
          </Action>
          <HomeBar />
        </BottomBar>
      </Screen>
    </>
  );
}
